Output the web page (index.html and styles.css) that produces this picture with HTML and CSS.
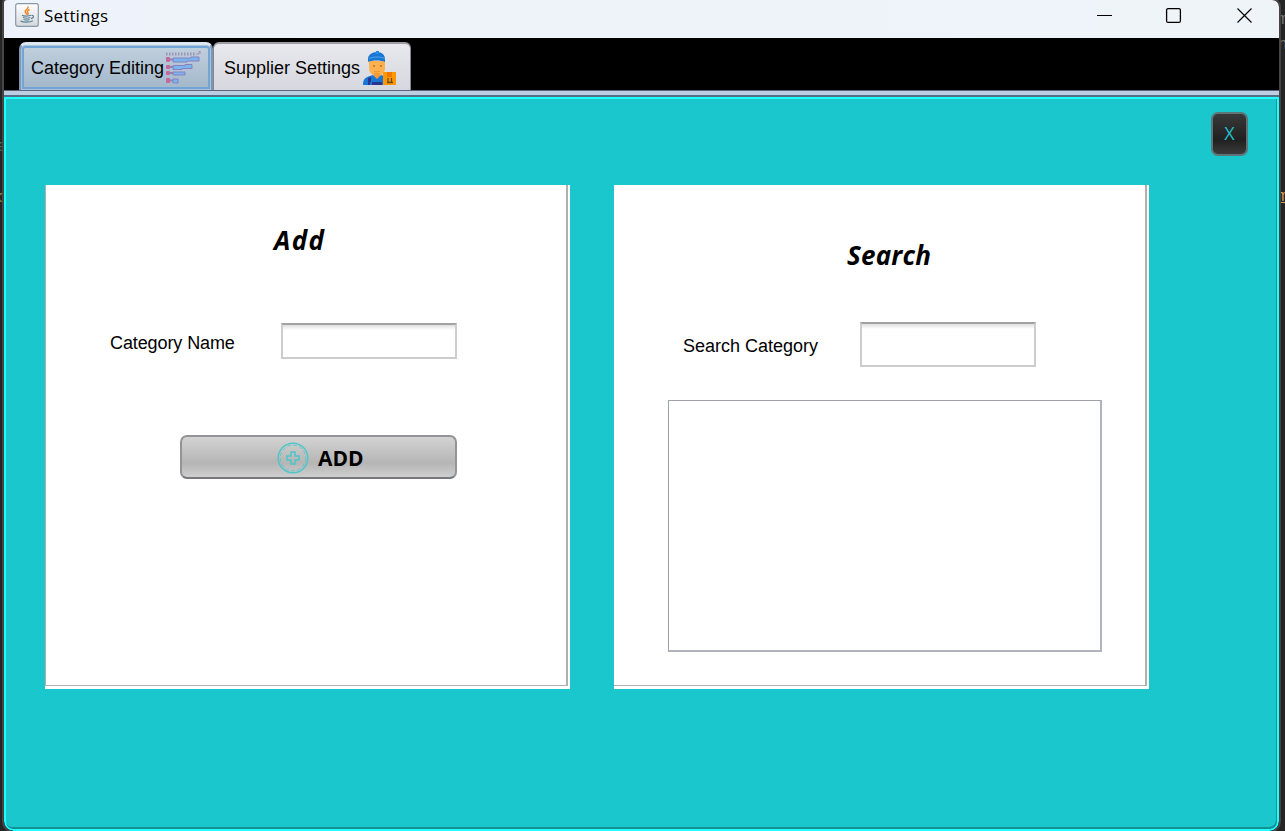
FILE: index.html
```html
<!DOCTYPE html>
<html lang="en">
<head>
<meta charset="utf-8">
<title>Settings</title>
<link rel="stylesheet" href="styles.css">
</head>
<body>
<div class="backdrop">
  <span class="code code-a">m</span>
  <span class="code code-b">n</span>
  <span class="code code-c">m</span>
  <span class="code code-d">e</span>
  <span class="code code-e">c</span>
</div>
<div class="window">
  <header class="titlebar">
    <svg class="java" width="24" height="24" viewBox="0 0 24 24">
      <defs><linearGradient id="jg" x2="0" y2="1"><stop offset="0" stop-color="#fff"/><stop offset="1" stop-color="#d5d8db"/></linearGradient></defs>
      <rect x=".7" y=".7" width="22.6" height="22.6" rx="2" fill="url(#jg)" stroke="#8799a8" stroke-width="1.2"/>
      <path d="M12.7 3.5c1.5 2.4-3.5 3.5-2.4 5.600.4.9 1.500 1.500 1 2.600M14.600 6.500c-2.200 1-3.200 2-1.600 3.400.6.7-.1 1.400-.7 1.900" fill="none" stroke="#ee8a2c" stroke-width="1.500"/>
      <path d="M7 12.300c1.500 1 7 1 9 0M8 14.500c2 .8 5.500.8 7.500 0M8.500 16.500c2 .7 4.500.7 6 0M16.500 12.500c3-.6 2.500 2.500-.5 3.200M5.500 18c2.500 1.600 9.500 1.500 12.500-.2" fill="none" stroke="#5b8299" stroke-width="1.200"/>
    </svg>
    <span class="title">Settings</span>
    <svg class="controls" width="160" height="20" viewBox="0 0 160 20" fill="none" stroke="#000">
      <path d="M1 10.500h15"/>
      <rect x="70.600" y="3.600" width="13.800" height="13.800" rx="1.500" stroke-width="1.300"/>
      <path d="M141.500 3.500l14 14M155.500 3.500l-14 14" stroke-width="1.200"/>
    </svg>
  </header>
  <nav class="tabs">
    <div class="tab tab-active">
      <span class="tab-text">Category Editing</span>
      <svg class="chart" width="36" height="34" viewBox="0 0 36 34">
        <path d="M1 3h29" stroke="#9a94b8" stroke-width="3" stroke-dasharray="1.500 1.500"/>
        <path d="M31 3h3v-3h1v3" fill="none" stroke="#a58eb4"/>
        <g fill="#c8669c"><rect x="1" y="6" width="4" height="5" rx="1"/><rect x="1" y="14" width="4" height="4" rx="1"/><rect x="1" y="20" width="4" height="4" rx="1"/><rect x="1" y="27" width="4" height="5" rx="1"/></g>
        <path d="M4 8.500h4M4 16h4M4 22h4M4 29.500h4" stroke="#9a7eb2" stroke-width="2"/>
        <g fill="#78b6f0" stroke="#8c7fbd"><path d="M8 7h18v-1h8v4H22v1H8z"/><path d="M8 14.500h12v-1h7v4H17v1H8z"/><path d="M8 21h12v3H8z"/><path d="M8 28h5v4H8z"/></g>
      </svg>
    </div>
    <div class="tab">
      <span class="tab-text">Supplier Settings</span>
      <svg class="person" width="34" height="35" viewBox="0 0 34 35">
        <path d="M6 10h16v7c0 4-3 8-8 8s-8-4-8-8z" fill="#ffb14f"/>
        <path d="M11 22h6v5l-3 2-3-2z" fill="#f49b35"/>
        <path d="M0 34c0-7 3-8 10-10l4 4 4-4c5 1 7 2 8 10z" fill="#1976d2"/>
        <path d="M5 27l3-1v5h12v-5l3 1v7H5z" fill="#283593"/>
        <path d="M8 31v3M20 30v4" stroke="#1976d2" stroke-width="2"/>
        <path d="M5 11V8c0-4 4-7 9-7s8 3 8 7v3c-4-2-13-2-17 0z" fill="#1976d2"/>
        <path d="M6 7.500c5-2 11-2 16 0" stroke="#51a4eb" fill="none"/>
        <path d="M13 0h3v3h-3z" fill="#248be8"/>
        <circle cx="11" cy="15" r=".8" fill="#784719"/><circle cx="18" cy="15" r=".8" fill="#784719"/>
        <path d="M11 20q3 2 6 0" fill="none" stroke="#eb9330"/>
        <path d="M20 21h13v13H20z" fill="#ff9800"/>
        <path d="M24 21h5v5h-5z" fill="#ed7900"/>
        <path d="M25 27v4M28.500 27v4M24 31.500h6" stroke="#6b4a22" stroke-width="1.300"/>
      </svg>
    </div>
  </nav>
  <div class="divider"></div>
  <main class="pane">
    <div class="pane-top"><button class="close">X</button></div>
    <div class="panels">
      <section class="panel panel-add">
        <div class="inner">
          <h2 class="heading">Add</h2>
          <div class="row"><label class="label">Category Name</label><input class="field"></div>
          <button class="add">
            <svg width="32" height="32" viewBox="0 0 32 32" fill="none" stroke="#50c5c9">
              <circle cx="16" cy="16" r="14.800" stroke-width="1.500"/>
              <circle cx="16" cy="16" r="12.800" stroke-width=".8" stroke-dasharray="4 2"/>
              <path d="M14 10h4v4h4v4h-4v4h-4v-4h-4v-4h4z" stroke-width="1.600"/>
            </svg>
            <span>ADD</span>
          </button>
        </div>
      </section>
      <section class="panel panel-search">
        <div class="inner">
          <h2 class="heading">Search</h2>
          <div class="row"><label class="label">Search Category</label><input class="field"></div>
          <div class="results"></div>
        </div>
      </section>
    </div>
  </main>
</div>
</body>
</html>
```

FILE: styles.css
```css
* { box-sizing: border-box; }
body {
  margin: 0;
  height: 831px;
  overflow: hidden;
  background: #252525;
  color: #000;
  font-family: "Liberation Sans", Arial, sans-serif;
}
.backdrop { position: absolute; inset: 0; overflow: hidden; }
.code { position: absolute; color: #7b7b72; font: 16px "Liberation Mono", monospace; }
.code-a { left: 1278px; top: 11px; }
.code-b { left: 1278px; top: 36px; }
.code-c { left: 1278px; top: 188px; color: #d9a256; text-decoration: underline; }
.code-d { left: -3px; top: 138px; color: #45705a; }
.code-e { left: -3px; top: 189px; color: #8b8a3f; }
.window {
  position: relative;
  display: flex;
  flex-direction: column;
  width: 1275px;
  height: 831px;
  margin-left: 4px;
  background: #000;
  border-radius: 3px 7px 10px 10px;
  box-shadow: 0 0 0 2px #454545;
  overflow: hidden;
}
.titlebar {
  display: flex;
  align-items: flex-start;
  height: 38px;
  padding: 3px 23px 0 11px;
  background: linear-gradient(90deg, #eef3fb, #eef4f8);
}
.title {
  margin: 1px 0 0 5px;
  font: 17px/24px "Open Sans", sans-serif;
  letter-spacing: 0.15px;
}
.controls { margin: 2px 0 0 auto; }
.tabs { display: flex; height: 52px; padding: 4px 0 0 15px; }
.tab {
  display: flex;
  width: 198px;
  height: 48px;
  padding: 9px 0 0 10px;
  border: 1px solid #85868e;
  border-top: 2px solid #9c9ca2;
  border-bottom: 0;
  border-radius: 6px 6px 0 0;
  background: linear-gradient(#e8e8ed, #d6d8df);
  font-size: 18px;
}
.tab-active {
  width: 194px;
  padding: 8px 0 0 10px;
  border: 2px solid #8095ad;
  border-top: 3px solid #dce7f2;
  border-bottom: 0;
  border-radius: 7px 7px 0 0;
  background: linear-gradient(#c1d0de, #a2b7ca);
  box-shadow: inset 0 0 0 1px #a9c3dd, inset 0 0 0 3px #73a4d6;
}
.tab-text { line-height: 30px; white-space: nowrap; }
.chart { margin: -2px 0 0 1px; }
.person { margin: -2px 0 0 3px; }
.divider {
  flex: none;
  height: 7px;
  background: linear-gradient(#5d6678 0 1px, #bccfe2 1px 5px, #536e87 5px 7px);
}
.pane {
  flex: 1;
  padding: 13px 29px 0 39px;
  background: #1ac7cd;
  border: 2px solid #20ffff;
  border-radius: 0 0 9px 9px;
  box-shadow: inset -1px -2px #168f95;
}
.pane-top { display: flex; justify-content: flex-end; height: 73px; }
.close {
  width: 37px;
  height: 44px;
  padding: 0 0 2px;
  border: 2px solid #5d7577;
  border-radius: 7px;
  background: linear-gradient(#393939, #202020 65%, #3b3b3b);
  color: #24bfd0;
  font: 18px "Open Sans", sans-serif;
}
.panels { display: flex; gap: 44px; }
.panel { height: 504px; padding: 0 2px 3px 0; background: #fff; }
.panel-add { width: 525px; }
.panel-search { width: 535px; }
.inner { height: 501px; border-right: 2px solid #b0b0b0; border-bottom: 1px solid #b0b0b0; }
.panel-add .inner { border-left: 1px solid #b0b0b0; }
.heading {
  margin: 0;
  font: italic bold 26px/36px "Open Sans", sans-serif;
}
.panel-add .heading { padding: 37px 0 0 228px; letter-spacing: 1.3px; }
.panel-search .heading { padding: 52px 0 0 233px; letter-spacing: 0.2px; }
.row { display: flex; }
.label { font-size: 18px; line-height: 22px; white-space: nowrap; }
.field {
  width: 176px;
  padding: 0 6px;
  border: 2px solid #cdcdcd;
  border-top-color: #a2a2a2;
  background: linear-gradient(#dedede, #fff 5px);
}
.panel-add .row { padding: 65px 0 0 64px; }
.panel-add .label { width: 171px; padding-top: 9px; letter-spacing: -0.1px; }
.panel-add .field { height: 36px; }
.add {
  display: flex;
  align-items: center;
  gap: 9px;
  width: 277px;
  height: 44px;
  margin: 76px 0 0 134px;
  padding: 1px 0 0 95px;
  border: 2px solid #929497;
  border-bottom: 2px solid #77787b;
  border-radius: 7px;
  background: linear-gradient(#d3d3d3, #b5b5b5 65%, #cecece);
  font: bold 21px "Open Sans", sans-serif;
  color: #000;
}
.panel-search .row { padding: 49px 0 0 69px; }
.panel-search .label { width: 177px; padding-top: 13px; }
.panel-search .field { height: 45px; }
.results {
  width: 434px;
  height: 252px;
  margin: 33px 0 0 54px;
  border: 1px solid #9ea0aa;
  border-right: 2px solid #b0b3bd;
  border-bottom: 2px solid #b0b3bd;
}
```
